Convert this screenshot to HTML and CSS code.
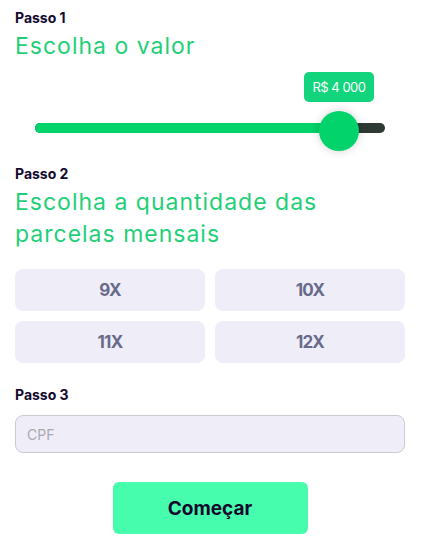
FILE: index.html
```html
<!DOCTYPE html>
<html lang="pt-br">
<head>
  <meta charset="UTF-8">
  <meta name="viewport" content="width=device-width, initial-scale=1.0">
  <title>Simulação</title>
  <link rel="stylesheet" href="styles.css">
</head>
<body>
  <div class="container">
    <section class="step">
      <p class="step-label">Passo 1</p>
      <h2 class="step-title">Escolha o valor</h2>
      <div class="slider" style="--pos: 86.86%">
        <span class="slider-value">R$ 4 000</span>
        <div class="slider-track">
          <div class="slider-fill"></div>
        </div>
        <span class="slider-thumb"></span>
      </div>
    </section>

    <section class="step step-two">
      <p class="step-label">Passo 2</p>
      <h2 class="step-title">Escolha a quantidade das parcelas mensais</h2>
      <div class="options">
        <button class="option">9X</button>
        <button class="option">10X</button>
        <button class="option">11X</button>
        <button class="option">12X</button>
      </div>
    </section>

    <section class="step step-three">
      <p class="step-label">Passo 3</p>
      <input type="text" class="cpf-input" placeholder="CPF">
    </section>

    <div class="actions">
      <button class="start-btn">Começar</button>
    </div>
  </div>
</body>
</html>
```

FILE: styles.css
```css
body {
  font-family: Inter, "Open Sans", sans-serif;
  margin: 0;
  padding: 0;
  background-color: #ffffff;
}

.container {
  width: 390px;
  padding: 8px 15px 0;
}

.step-label {
  margin: 0;
  font-size: 14px;
  font-weight: 700;
  line-height: 20px;
  color: #140a2e;
}

.step-title {
  margin: 2px 0 0;
  font-size: 23px;
  font-weight: 400;
  line-height: 32px;
  letter-spacing: 1px;
  color: #1fcf78;
}

/* slider */
.slider {
  position: relative;
  margin: 10px 20px 0;
  padding-top: 51px;
}

.slider-value {
  position: absolute;
  top: 0;
  left: calc(var(--pos) - 35px);
  width: 70px;
  height: 30px;
  line-height: 30px;
  text-align: center;
  background-color: #12d47c;
  color: #ffffff;
  font-size: 13px;
  letter-spacing: -0.5px;
  border-radius: 5px;
}

.slider-track {
  height: 10px;
  border-radius: 5px;
  background-color: #2f3a35;
  overflow: hidden;
}

.slider-fill {
  width: var(--pos);
  height: 100%;
  background-color: #02d36a;
}

.slider-thumb {
  position: absolute;
  top: 39px;
  left: calc(var(--pos) - 20px);
  width: 40px;
  height: 40px;
  border-radius: 50%;
  background-color: #02d36a;
  box-shadow: 0 0 10px rgba(0, 0, 0, 0.18);
}

.step-two {
  margin-top: 31px;
}

.options {
  display: grid;
  grid-template-columns: 1fr 1fr;
  gap: 10px;
  margin-top: 19px;
}

.option {
  height: 42px;
  border: none;
  border-radius: 8px;
  background-color: #efedf8;
  color: #676b89;
  font-family: inherit;
  font-size: 17px;
  font-weight: 700;
  letter-spacing: -0.8px;
  cursor: pointer;
}

.step-three {
  margin-top: 22px;
}

.cpf-input {
  display: block;
  box-sizing: border-box;
  width: 100%;
  height: 38px;
  margin-top: 10px;
  padding: 0 11px;
  border: 1px solid #cbcbd3;
  border-radius: 8px;
  background-color: #efeef8;
  font-family: inherit;
  font-size: 14px;
}

.cpf-input::placeholder {
  color: #a9a9b0;
}

.actions {
  display: flex;
  justify-content: center;
  margin-top: 29px;
}

.start-btn {
  width: 195px;
  height: 52px;
  border: none;
  border-radius: 6px;
  background-color: #46fdae;
  color: #12082b;
  font-family: inherit;
  font-size: 19px;
  font-weight: 700;
  cursor: pointer;
}
```
